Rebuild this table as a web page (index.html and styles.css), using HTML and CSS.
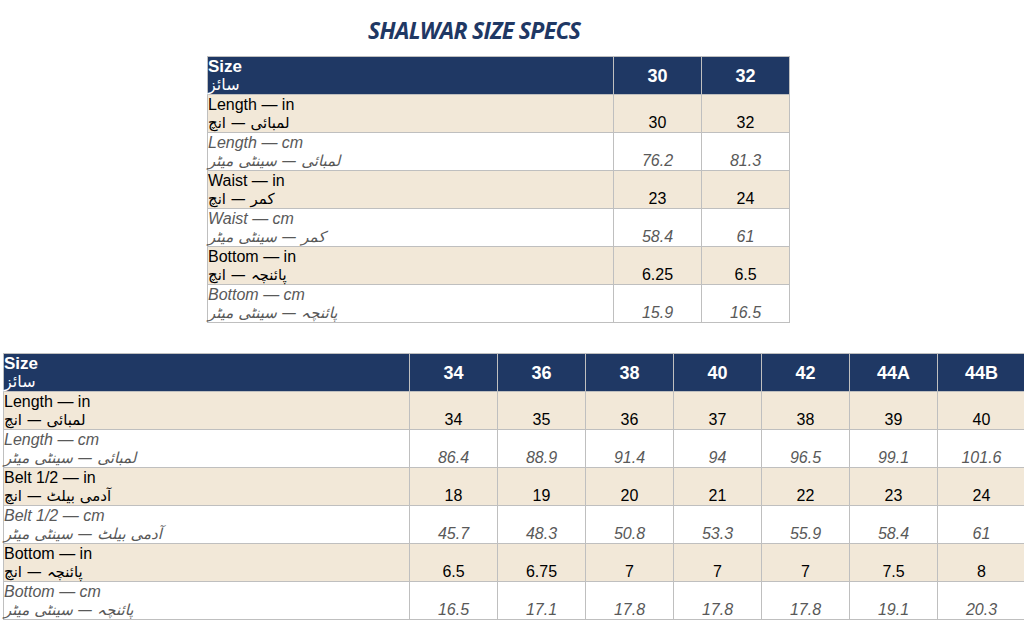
FILE: index.html
```html
<!DOCTYPE html>
<html lang="en">
<head>
<meta charset="utf-8">
<title>Shalwar Size Specs</title>
<link rel="stylesheet" href="styles.css">
</head>
<body>
<div class="page">
  <h1 class="title">SHALWAR SIZE SPECS</h1>

  <table class="spec spec-top">
    <colgroup><col class="c-label"><col class="c-size"><col class="c-size"></colgroup>
    <tr class="head">
      <td class="label"><span class="en">Size</span><span class="ur">سائز</span></td>
      <td class="num">30</td><td class="num">32</td>
    </tr>
    <tr class="inch">
      <td class="label"><span class="en">Length — in</span><span class="ur">لمبائی — انچ</span></td>
      <td class="num">30</td><td class="num">32</td>
    </tr>
    <tr class="cm">
      <td class="label"><span class="en">Length — cm</span><span class="ur">لمبائی — سینٹی میٹر</span></td>
      <td class="num">76.2</td><td class="num">81.3</td>
    </tr>
    <tr class="inch">
      <td class="label"><span class="en">Waist — in</span><span class="ur">کمر — انچ</span></td>
      <td class="num">23</td><td class="num">24</td>
    </tr>
    <tr class="cm">
      <td class="label"><span class="en">Waist — cm</span><span class="ur">کمر — سینٹی میٹر</span></td>
      <td class="num">58.4</td><td class="num">61</td>
    </tr>
    <tr class="inch">
      <td class="label"><span class="en">Bottom — in</span><span class="ur">پائنچہ — انچ</span></td>
      <td class="num">6.25</td><td class="num">6.5</td>
    </tr>
    <tr class="cm">
      <td class="label"><span class="en">Bottom — cm</span><span class="ur">پائنچہ — سینٹی میٹر</span></td>
      <td class="num">15.9</td><td class="num">16.5</td>
    </tr>
  </table>

  <table class="spec spec-bottom">
    <colgroup><col class="c-label"><col class="c-size"><col class="c-size"><col class="c-size"><col class="c-size"><col class="c-size"><col class="c-size"><col class="c-size"></colgroup>
    <tr class="head">
      <td class="label"><span class="en">Size</span><span class="ur">سائز</span></td>
      <td class="num">34</td><td class="num">36</td><td class="num">38</td><td class="num">40</td><td class="num">42</td><td class="num">44A</td><td class="num">44B</td>
    </tr>
    <tr class="inch">
      <td class="label"><span class="en">Length — in</span><span class="ur">لمبائی — انچ</span></td>
      <td class="num">34</td><td class="num">35</td><td class="num">36</td><td class="num">37</td><td class="num">38</td><td class="num">39</td><td class="num">40</td>
    </tr>
    <tr class="cm">
      <td class="label"><span class="en">Length — cm</span><span class="ur">لمبائی — سینٹی میٹر</span></td>
      <td class="num">86.4</td><td class="num">88.9</td><td class="num">91.4</td><td class="num">94</td><td class="num">96.5</td><td class="num">99.1</td><td class="num">101.6</td>
    </tr>
    <tr class="inch">
      <td class="label"><span class="en">Belt 1/2 — in</span><span class="ur">آدمی بیلٹ — انچ</span></td>
      <td class="num">18</td><td class="num">19</td><td class="num">20</td><td class="num">21</td><td class="num">22</td><td class="num">23</td><td class="num">24</td>
    </tr>
    <tr class="cm">
      <td class="label"><span class="en">Belt 1/2 — cm</span><span class="ur">آدمی بیلٹ — سینٹی میٹر</span></td>
      <td class="num">45.7</td><td class="num">48.3</td><td class="num">50.8</td><td class="num">53.3</td><td class="num">55.9</td><td class="num">58.4</td><td class="num">61</td>
    </tr>
    <tr class="inch">
      <td class="label"><span class="en">Bottom — in</span><span class="ur">پائنچہ — انچ</span></td>
      <td class="num">6.5</td><td class="num">6.75</td><td class="num">7</td><td class="num">7</td><td class="num">7</td><td class="num">7.5</td><td class="num">8</td>
    </tr>
    <tr class="cm">
      <td class="label"><span class="en">Bottom — cm</span><span class="ur">پائنچہ — سینٹی میٹر</span></td>
      <td class="num">16.5</td><td class="num">17.1</td><td class="num">17.8</td><td class="num">17.8</td><td class="num">17.8</td><td class="num">19.1</td><td class="num">20.3</td>
    </tr>
  </table>
</div>
</body>
</html>
```
FILE: styles.css
```css
html, body {
  margin: 0;
  padding: 0;
  background: #ffffff;
}

body {
  font-family: "Liberation Sans", "DejaVu Sans", sans-serif;
  color: #000000;
  overflow: hidden;
}

.page {
  padding-top: 15px;
}

.title {
  margin: 0 0 0 368px;
  font-family: "Open Sans", "Liberation Sans", sans-serif;
  font-weight: 700;
  font-style: italic;
  font-size: 23px;
  line-height: 30px;
  letter-spacing: -0.7px;
  color: #1f3864;
}

.spec {
  border-collapse: collapse;
  table-layout: fixed;
}

.spec-top {
  margin: 11px 0 0 207px;
  width: 583px;
}

.spec-bottom {
  margin: 30px 0 0 3px;
  width: 1023px;
}

.c-label { width: 406px; }
.c-size { width: 88px; }

.spec td {
  border: 1px solid #bfbfbf;
  height: 37px;
  padding: 0;
  box-sizing: border-box;
}

.label {
  padding: 0 0 0 3px;
  vertical-align: top;
  font-size: 16px;
}

.label .en {
  display: block;
  line-height: 18px;
  padding-top: 1px;
}

.label .ur {
  display: block;
  direction: rtl;
  text-align: left;
  unicode-bidi: isolate;
  font-family: "DejaVu Sans", "Noto Sans", sans-serif;
  font-size: 15px;
  line-height: 18px;
}

.num {
  text-align: center;
  vertical-align: bottom;
  font-family: "Liberation Sans Narrow", "Liberation Sans", sans-serif;
  font-size: 16px;
  line-height: 18px;
  padding-bottom: 0 !important;
}

.head td {
  background: #1f3864;
  color: #ffffff;
}

.head .label .en {
  font-weight: 700;
  font-size: 17px;
}

.head .label .ur {
  font-size: 16px;
}

.head .num {
  vertical-align: middle;
  font-family: "Liberation Sans Narrow", "Liberation Sans", sans-serif;
  font-weight: 700;
  font-size: 18px;
}

.inch td {
  background: #f2e8d8;
}

.cm td {
  background: #ffffff;
  color: #595959;
  font-style: italic;
}
```
